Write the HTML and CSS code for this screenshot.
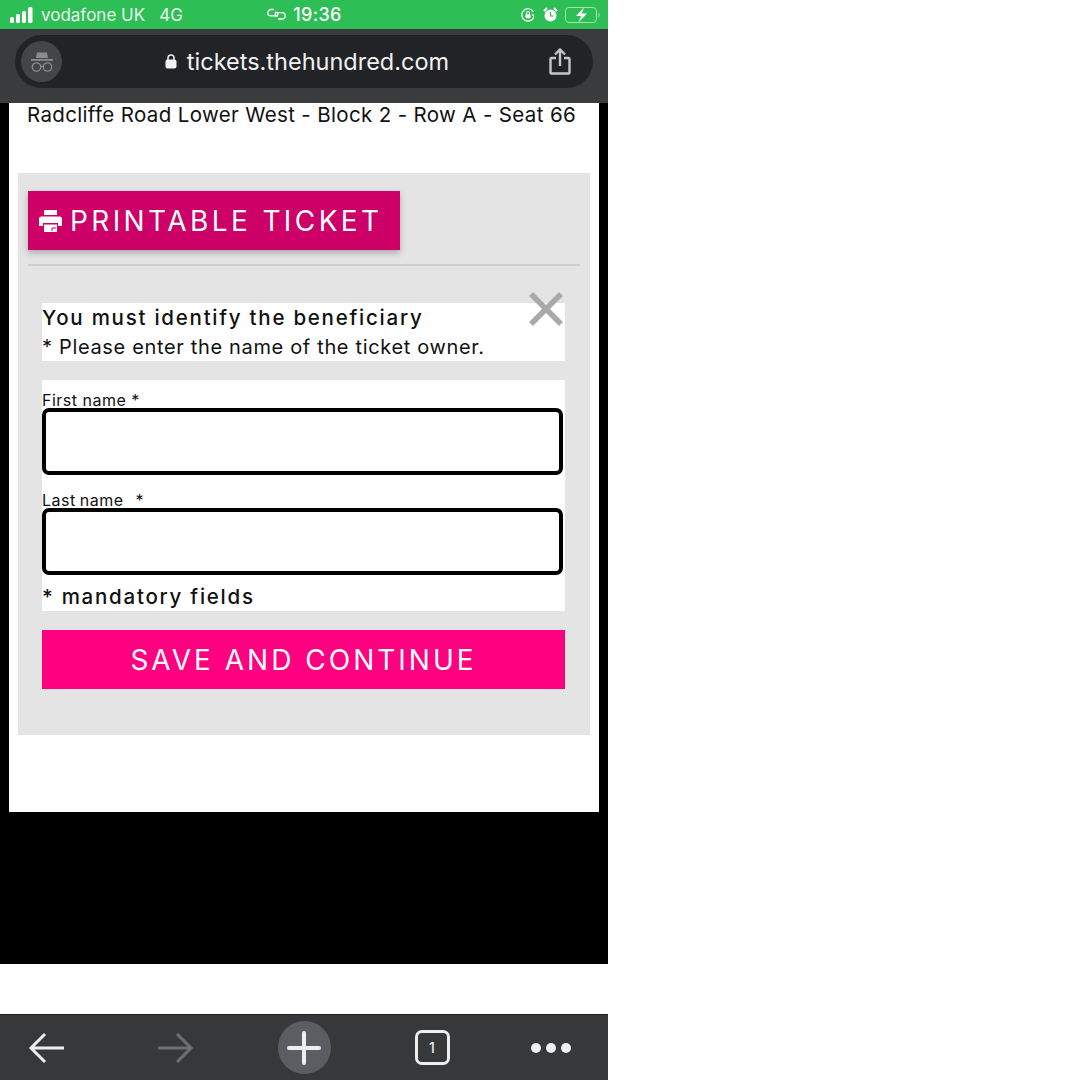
FILE: index.html
```html
<!DOCTYPE html>
<html lang="en">
<head>
    <meta charset="UTF-8">
    <title>Ticket</title>
    <link rel="stylesheet" href="styles.css">
</head>
<body>
<div class="phone">

    <div class="status-bar">
        <div class="status-left">
            <svg class="signal" width="26" height="16" viewBox="0 0 26 16">
                <rect x="0" y="10" width="4" height="6" rx="1.5"/>
                <rect x="6" y="7" width="4" height="9" rx="1.5"/>
                <rect x="12" y="4" width="4" height="12" rx="1.5"/>
                <rect x="18" y="0" width="4.5" height="16" rx="1.5"/>
            </svg>
            <span>vodafone UK</span>
            <span class="network">4G</span>
        </div>
        <div class="status-center">
            <svg width="21" height="13" viewBox="0 0 21 13" fill="none" stroke="#fff" stroke-width="1.3">
                <path d="M8 1.500H5a3.200 3.200 0 0 0 0 6.400h6a2.200 2.200 0 0 0 0-3.400H9"/>
                <path d="M12 11h4a3.200 3.200 0 0 0 0-6.400h-6a2.200 2.200 0 0 0 0 3.400h2"/>
            </svg>
            <span>19:36</span>
        </div>
        <div class="status-right">
            <svg width="16" height="16" viewBox="0 0 16 16" fill="none" stroke="#fff" stroke-width="1.2">
                <path d="M14 9.500A6.200 6.200 0 1 1 13.500 5"/>
                <path d="M14.500 7.500l-1.400 2-1.600-2z" fill="#fff" stroke="none"/>
                <rect x="5.500" y="7.200" width="5" height="4" rx="0.800" fill="#fff" stroke="none"/>
                <path d="M6.500 7.200V6a1.500 1.500 0 0 1 3 0v1.200"/>
            </svg>
            <svg width="15" height="16" viewBox="0 0 15 16">
                <circle cx="7.500" cy="8.500" r="6" fill="#fff"/>
                <path d="M1 4l3-3M14 4l-3-3" stroke="#fff" stroke-width="2"/>
                <path d="M7.500 5v4h3" stroke="#2dbe55" stroke-width="1.200" fill="none"/>
            </svg>
            <svg width="36" height="18" viewBox="0 0 36 18">
                <rect x="0.500" y="1.500" width="31" height="15" rx="3.500" fill="none" stroke="#a6e2b6"/>
                <path d="M33.500 6.500c1.500.5 1.500 4.500 0 5z" fill="#a6e2b6"/>
                <path d="M19 1.500l-8 8.500h5l-2.500 6.500 8.500-9h-5.200z" fill="#fff"/>
            </svg>
        </div>
    </div>

    <div class="browser-bar">
        <div class="address-pill">
            <div class="incognito">
                <svg width="24" height="22" viewBox="0 0 24 22">
                    <path d="M6 7l1-5.500h10L18 7z" fill="#8a8c8f"/>
                    <rect x="1" y="8" width="22" height="1.800" fill="#8a8c8f"/>
                    <circle cx="6.500" cy="16" r="4.200" fill="none" stroke="#8a8c8f" stroke-width="1.300"/>
                    <circle cx="17.500" cy="16" r="4.200" fill="none" stroke="#8a8c8f" stroke-width="1.300"/>
                    <path d="M10.500 15.500h3" stroke="#8a8c8f" stroke-width="1.300"/>
                </svg>
            </div>
            <div class="url">
                <svg width="12" height="15" viewBox="0 0 12 15">
                    <rect x="0.500" y="5.500" width="11" height="9" rx="2" fill="#f2f2f2"/>
                    <path d="M3 6V4a3 3 0 0 1 6 0v2" fill="none" stroke="#f2f2f2" stroke-width="1.500"/>
                </svg>
                <span>tickets.thehundred.com</span>
            </div>
            <svg class="share" width="22" height="27" viewBox="0 0 22 27" fill="none" stroke="#c4c6c8" stroke-width="2.400">
                <path d="M7 10H2.500a1 1 0 0 0-1 1v13.500a1 1 0 0 0 1 1h17a1 1 0 0 0 1-1V11a1 1 0 0 0-1-1H15"/>
                <path d="M11 18V2M6 6.500L11 1.500l5 5"/>
            </svg>
        </div>
    </div>

    <div class="page">
        <div class="card">
            <p class="seat">Radcliffe Road Lower West - Block 2 - Row A - Seat 66</p>

            <div class="panel">
                <a class="print-btn">
                    <svg width="23" height="22" viewBox="0 0 23 22">
                        <path d="M5 0h13v5H5z" fill="#fff"/>
                        <path d="M2.500 6.500h18A2.500 2.500 0 0 1 23 9v7h-4v-3H4v3H0V9a2.500 2.500 0 0 1 2.500-2.500z" fill="#fff"/>
                        <path d="M5 14.500h13V22H5z" fill="#fff"/>
                        <path d="M13 21v-3h4" fill="none" stroke="#cc0066" stroke-width="1"/>
                    </svg>
                    <span>PRINTABLE TICKET</span>
                </a>
                <div class="divider"></div>

                <div class="notice">
                    <svg class="close" width="36" height="36" viewBox="0 0 36 36" stroke="#a9a9a9" stroke-width="5.500">
                        <path d="M3 3l30 30M33 3L3 33"/>
                    </svg>
                    <p class="notice-title">You must identify the beneficiary</p>
                    <p class="notice-text">* Please enter the name of the ticket owner.</p>
                </div>

                <form class="ticket-form">
                    <label class="field-label" for="first">First name *</label>
                    <input class="field-input" type="text" id="first">
                    <label class="field-label last" for="last">Last name &nbsp; *</label>
                    <input class="field-input" type="text" id="last">
                    <p class="mandatory">* mandatory fields</p>
                </form>

                <a class="save-btn">SAVE AND CONTINUE</a>
            </div>
        </div>
    </div>

    <div class="gap"></div>

    <div class="toolbar">
        <svg width="38" height="32" viewBox="0 0 38 32" fill="none" stroke="#eeeeee" stroke-width="3">
            <path d="M36 16H3M17 2L3 16l14 14"/>
        </svg>
        <svg width="38" height="32" viewBox="0 0 38 32" fill="none" stroke="#6f7072" stroke-width="3">
            <path d="M2 16h33M21 2l14 14-14 14"/>
        </svg>
        <div class="new-tab">
            <svg width="36" height="36" viewBox="0 0 36 36" stroke="#eeeeee" stroke-width="4" stroke-linecap="round">
                <path d="M18 3v30M3 18h30"/>
            </svg>
        </div>
        <div class="tab-count">1</div>
        <div class="dots"><i></i><i></i><i></i></div>
    </div>

</div>
</body>
</html>
```

FILE: styles.css
```css
body {
    margin: 0;
    background-color: #ffffff;
    font-family: "Inter", Arial, sans-serif;
}

p {
    margin: 0;
}

.phone {
    width: 608px;
    height: 1080px;
    display: flex;
    flex-direction: column;
}

/* status bar */
.status-bar {
    height: 29px;
    background-color: #2dbe55;
    color: #ffffff;
    display: grid;
    grid-template-columns: 1fr auto 1fr;
    align-items: center;
    padding: 0 7px 0 10px;
}

.status-left {
    display: flex;
    align-items: center;
    font-size: 17px;
    color: #e9f8ee;
}

.signal {
    fill: #ffffff;
    margin-right: 5px;
}

.network {
    margin-left: 14px;
}

.status-center {
    display: flex;
    align-items: center;
    gap: 6px;
    margin-right: 3px;
    font-size: 18px;
    font-weight: 500;
    letter-spacing: 0.3px;
}

.status-right {
    display: flex;
    align-items: center;
    justify-content: flex-end;
    gap: 7px;
}

/* browser bar */
.browser-bar {
    height: 74px;
    background-color: #3a3b3d;
    padding: 6px 15px 15px;
    box-sizing: border-box;
}

.address-pill {
    height: 53px;
    background-color: #222326;
    border-radius: 27px;
    display: flex;
    align-items: center;
    padding: 0 22px 0 6px;
}

.incognito {
    width: 41px;
    height: 41px;
    border-radius: 50%;
    background-color: #434548;
    display: flex;
    align-items: center;
    justify-content: center;
}

.url {
    flex: 1;
    display: flex;
    align-items: center;
    justify-content: center;
    gap: 10px;
    color: #f2f2f2;
    font-size: 23.5px;
    margin-left: 3px;
}

/* page content */
.page {
    height: 861px;
    background-color: #000000;
    padding: 0 9px;
    box-sizing: border-box;
}

.card {
    height: 709px;
    background-color: #ffffff;
    padding: 0 9px;
    box-sizing: border-box;
}

.seat {
    height: 70px;
    padding-right: 5px;
    box-sizing: border-box;
    font-size: 20.5px;
    line-height: 24px;
    letter-spacing: 0.35px;
    text-align: center;
    color: #111111;
    white-space: nowrap;
}

.panel {
    height: 562px;
    background-color: #e4e4e4;
    padding: 18px 10px 0;
    box-sizing: border-box;
}

.print-btn {
    width: 372px;
    height: 59px;
    background-color: #cc0066;
    color: #ffffff;
    display: flex;
    align-items: center;
    gap: 8px;
    padding-left: 11px;
    box-sizing: border-box;
    box-shadow: 0 3px 6px rgba(0, 0, 0, 0.25);
    font-size: 28px;
    letter-spacing: 3.4px;
}

.divider {
    height: 2px;
    background-color: #cccccc;
    margin-top: 14px;
}

.notice {
    position: relative;
    height: 58px;
    margin: 37px 15px 0 14px;
    background-color: #ffffff;
    color: #111111;
}

.close {
    position: absolute;
    top: -12px;
    right: 1px;
}

.notice-title {
    font-size: 20.5px;
    font-weight: 500;
    line-height: 30px;
    letter-spacing: 1.75px;
    white-space: nowrap;
}

.notice-text {
    font-size: 20px;
    line-height: 29px;
    letter-spacing: 0.66px;
    white-space: nowrap;
}

.ticket-form {
    height: 231px;
    margin: 19px 15px 0 14px;
    padding-top: 11px;
    background-color: #ffffff;
    box-sizing: border-box;
    color: #111111;
}

.field-label {
    display: block;
    height: 17px;
    font-size: 16px;
    line-height: 19px;
    letter-spacing: 0.5px;
}

.field-label.last {
    margin-top: 16px;
    word-spacing: -1px;
}

.field-input {
    display: block;
    width: 521px;
    height: 67px;
    box-sizing: border-box;
    border: 4px solid #000000;
    border-radius: 7px;
    background-color: #ffffff;
}

.mandatory {
    margin-top: 9px;
    font-size: 20.5px;
    font-weight: 500;
    line-height: 26px;
    letter-spacing: 1.75px;
}

.save-btn {
    display: block;
    height: 59px;
    margin: 19px 15px 0 14px;
    background-color: #ff0080;
    color: #ffffff;
    text-align: center;
    font-size: 28px;
    line-height: 61px;
    letter-spacing: 3px;
}

.gap {
    height: 50px;
    background-color: #ffffff;
}

/* bottom toolbar */
.toolbar {
    height: 66px;
    background-color: #37383a;
    border-top: 1px solid #222222;
    box-sizing: border-box;
    display: grid;
    grid-template-columns: 94px 162px 96px 160px 78px;
    justify-items: center;
    align-items: center;
}

.new-tab {
    width: 53px;
    height: 53px;
    border-radius: 50%;
    background-color: #5a5e62;
    display: flex;
    align-items: center;
    justify-content: center;
}

.tab-count {
    width: 35px;
    height: 35px;
    box-sizing: border-box;
    border: 3px solid #eeeeee;
    border-radius: 7px;
    color: #eeeeee;
    font-size: 14px;
    font-weight: 500;
    display: flex;
    align-items: center;
    justify-content: center;
}

.dots {
    display: flex;
    gap: 5px;
}

.dots i {
    width: 10px;
    height: 10px;
    border-radius: 50%;
    background-color: #eeeeee;
}
```
